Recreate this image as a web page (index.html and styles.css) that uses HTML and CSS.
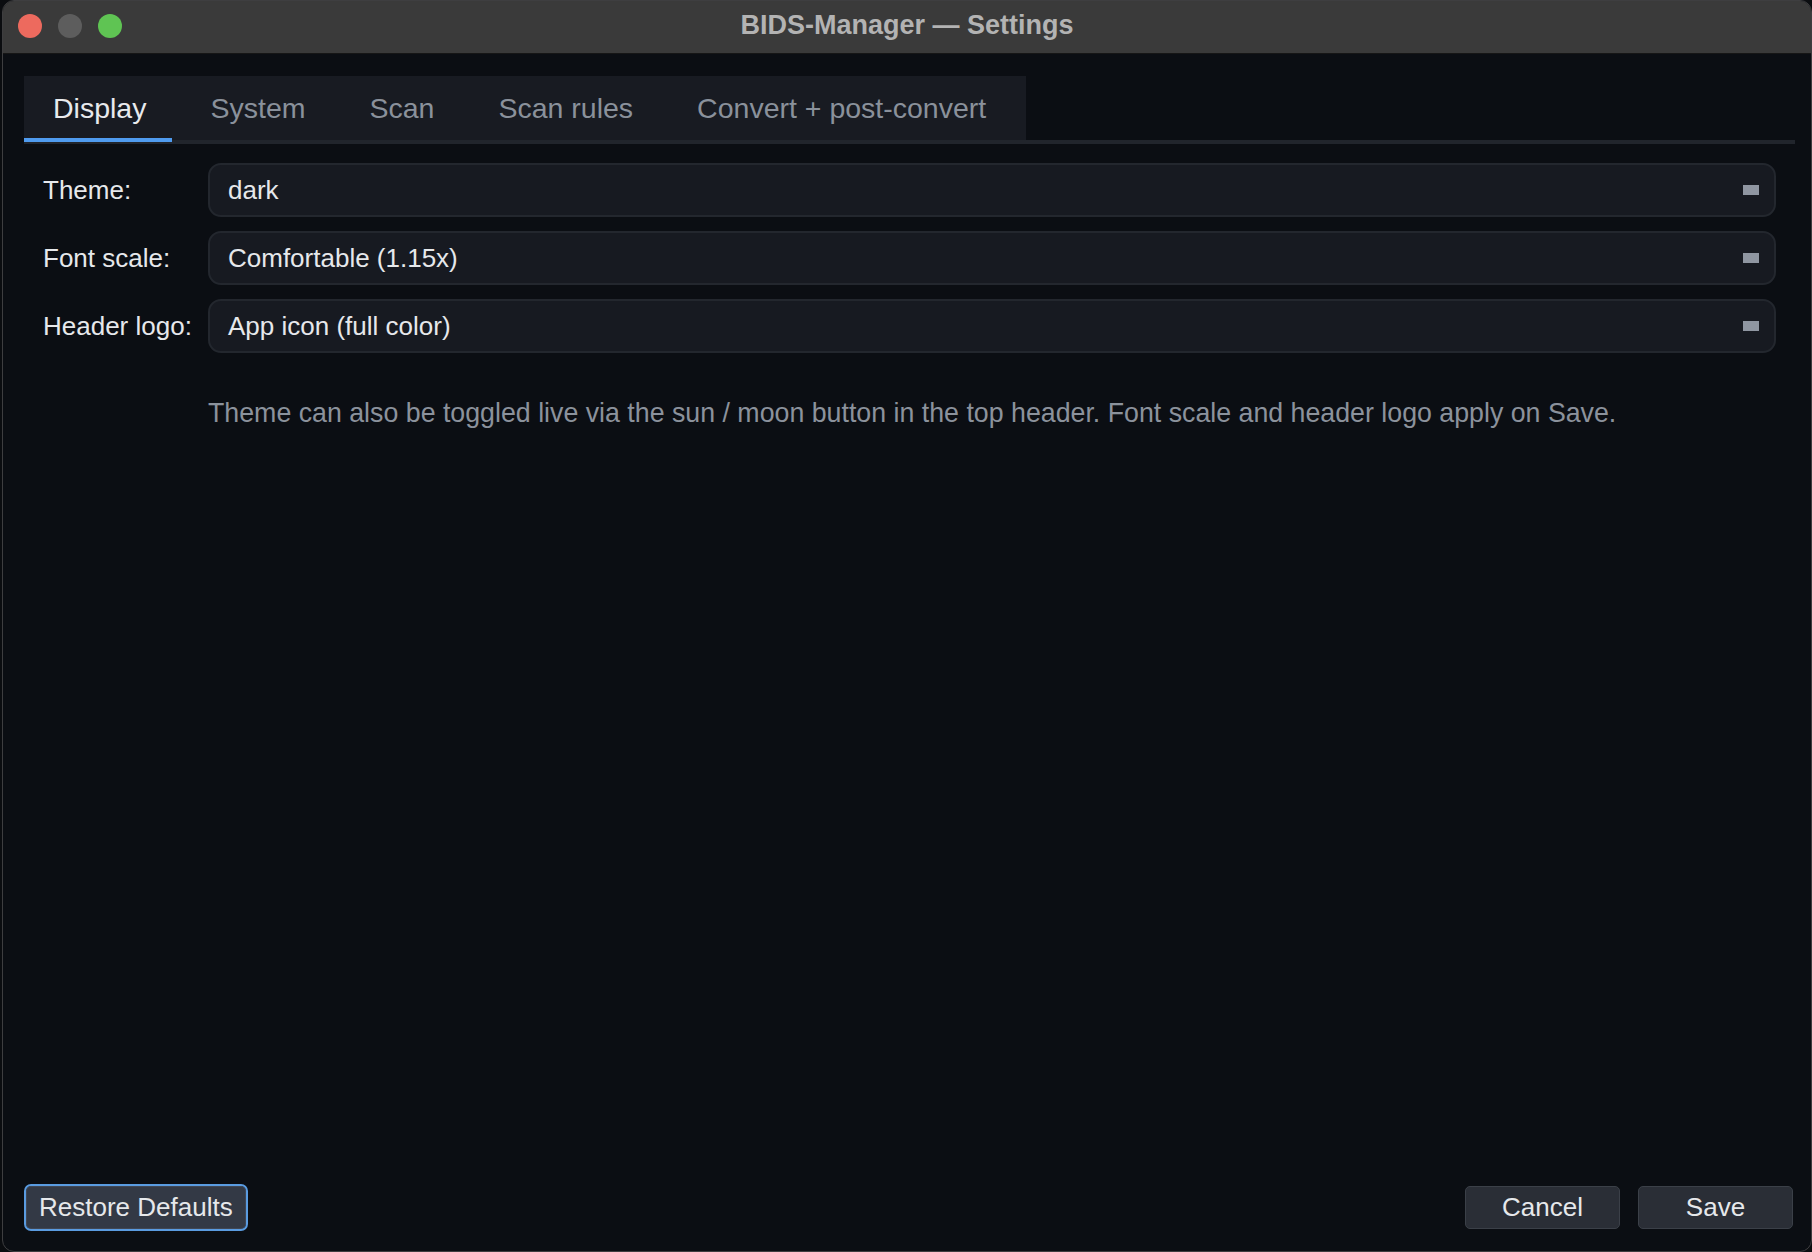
FILE: index.html
```html
<!DOCTYPE html>
<html>
<head>
  <title>BIDS-Manager — Settings</title>
  <link rel="stylesheet" href="styles.css">
</head>
<body>
  <div class="window">
    <div class="titlebar">
      <div class="lights">
        <span class="light close"></span>
        <span class="light minimize"></span>
        <span class="light zoom"></span>
      </div>
      <div class="title">BIDS-Manager — Settings</div>
      <div></div>
    </div>

    <div class="content">
      <div class="tabbar">
        <div class="tabs">
          <div class="tab active">Display</div>
          <div class="tab">System</div>
          <div class="tab">Scan</div>
          <div class="tab">Scan rules</div>
          <div class="tab">Convert + post-convert</div>
        </div>
      </div>

      <div class="form">
        <label class="form-label">Theme:</label>
        <div class="combo">
          <span>dark</span>
          <span class="combo-arrow"></span>
        </div>

        <label class="form-label">Font scale:</label>
        <div class="combo">
          <span>Comfortable (1.15x)</span>
          <span class="combo-arrow"></span>
        </div>

        <label class="form-label">Header logo:</label>
        <div class="combo">
          <span>App icon (full color)</span>
          <span class="combo-arrow"></span>
        </div>

        <p class="hint">Theme can also be toggled live via the sun / moon button in the top header. Font scale and header logo apply on Save.</p>
      </div>

      <div class="spacer"></div>

      <div class="footer">
        <button class="btn btn-focus">Restore Defaults</button>
        <div class="footer-right">
          <button class="btn btn-wide">Cancel</button>
          <button class="btn btn-wide">Save</button>
        </div>
      </div>
    </div>
  </div>
</body>
</html>
```

FILE: styles.css
```css
body {
  margin: 0;
  padding: 0;
  background: #0b0d10;
  font-family: "Liberation Sans", Arial, sans-serif;
  overflow: hidden;
}

.window {
  margin-left: 2px;
  width: 1810px;
  height: 1252px;
  box-sizing: border-box;
  border: 1px solid #3e3e40;
  border-radius: 12px;
  overflow: hidden;
  display: flex;
  flex-direction: column;
  background: #0b0e13;
}

/* title bar */

.titlebar {
  height: 53px;
  box-sizing: border-box;
  flex-shrink: 0;
  display: grid;
  grid-template-columns: 1fr auto 1fr;
  align-items: center;
  background: #3a3a3a;
  border-bottom: 1px solid #161616;
  padding-bottom: 3px;
}

.lights {
  display: flex;
  gap: 16px;
  padding-left: 15px;
  padding-top: 1px;
}

.light {
  width: 24px;
  height: 24px;
  border-radius: 50%;
}

.light.close { background: #ed6a5e; }
.light.minimize { background: #5d5d5d; }
.light.zoom { background: #5fc453; }

.title {
  font-size: 27px;
  font-weight: bold;
  color: #b3b3b3;
}

/* body of the dialog */

.content {
  flex-grow: 1;
  display: flex;
  flex-direction: column;
  padding: 22px 16px 22px 21px;
  min-height: 0;
}

.tabbar {
  display: flex;
  border-bottom: 4px solid #21252c;
}

.tabs {
  display: flex;
  background: #181b22;
}

.tab {
  position: relative;
  height: 64px;
  line-height: 64px;
  padding: 0 35px 0 29px;
  font-size: 28.5px;
  color: #8a919b;
  cursor: pointer;
}

.tab:last-child {
  padding-right: 40px;
}

.tab.active {
  color: #e8eaed;
}

.tab.active::after {
  content: "";
  position: absolute;
  left: 0;
  right: 9px;
  bottom: -2px;
  height: 4px;
  background: #4f9bef;
}

.form {
  display: grid;
  grid-template-columns: 152px 1fr;
  column-gap: 13px;
  row-gap: 14px;
  align-items: center;
  padding: 19px 19px 0 19px;
}

.form-label {
  font-size: 26px;
  color: #e6e8eb;
}

.combo {
  height: 54px;
  box-sizing: border-box;
  display: flex;
  align-items: center;
  justify-content: space-between;
  padding: 0 15px 0 18px;
  background: #171a21;
  border: 2px solid #23272e;
  border-radius: 13px;
  font-size: 26px;
  color: #e6e8eb;
}

.combo-arrow {
  width: 16px;
  height: 10px;
  background: #8f96a1;
}

.hint {
  grid-column: 2;
  margin: 31px 0 0 0;
  font-size: 26.75px;
  color: #8b929c;
}

.spacer {
  flex-grow: 1;
}

/* dialog buttons */

.footer {
  display: flex;
  justify-content: space-between;
  align-items: center;
  padding: 0 2px;
}

.footer-right {
  display: flex;
  gap: 18px;
}

.btn {
  height: 43px;
  box-sizing: border-box;
  padding: 0 12px;
  background: #2a2e36;
  border: 1px solid #3b4048;
  border-radius: 5px;
  color: #e6e8eb;
  font-family: "Liberation Sans", Arial, sans-serif;
  font-size: 26px;
  cursor: pointer;
}

.btn-wide {
  width: 155px;
}

.btn-focus {
  background: #333945;
  border-color: #414754;
  outline: 2px solid #5a9be0;
}
```
